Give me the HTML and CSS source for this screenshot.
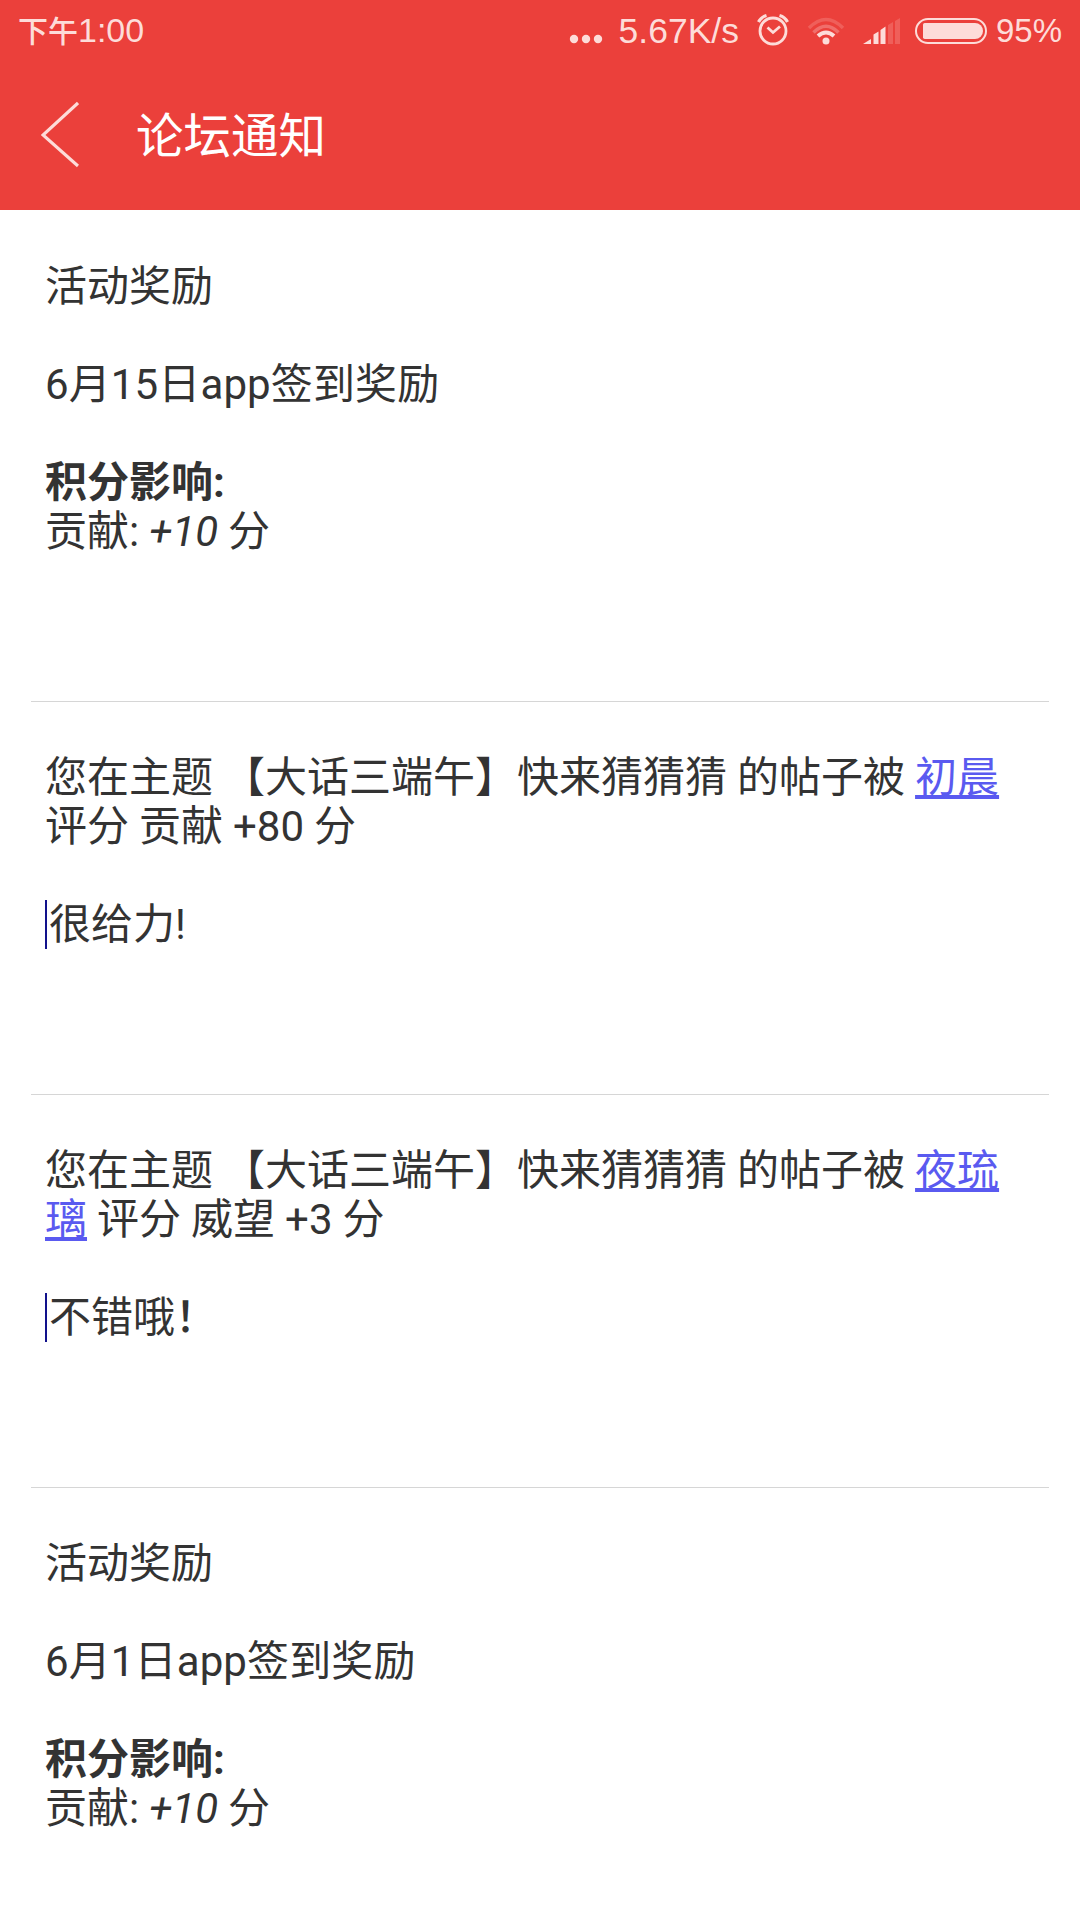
FILE: index.html
```html
<!DOCTYPE html>
<html lang="zh-CN">
<head>
    <meta charset="UTF-8">
    <title>论坛通知</title>
    <link rel="stylesheet" href="styles.css">
</head>
<body>
    <header class="header">
        <div class="status-bar">
            <div class="time"><span class="ampm">下午</span>1:00</div>
            <div class="status-right">
                <svg class="dots" width="34" height="10" viewBox="0 0 34 10" fill="#fddcd9"><circle cx="5" cy="5" r="4.2"/><circle cx="17" cy="5" r="4.2"/><circle cx="29" cy="5" r="4.2"/></svg>
                <span class="speed">5.67K/s</span>
                <svg class="alarm" width="32" height="34" viewBox="0 0 32 34" fill="none" stroke="#fddcd9"><circle cx="16" cy="18" r="13" stroke-width="2.8"/><path d="M10.5 14.5l5.5 5 7-6" stroke-width="2.8"/><path d="M1.5 9Q4 4 9.500 2.500M30.500 9Q28 4 22.500 2.500" stroke-width="3.2"/></svg>
                <svg class="wifi" width="38" height="28" viewBox="0 0 38 28" fill="none" stroke="#fddcd9"><path d="M2 11Q19-6 36 11" stroke-width="3.500" opacity=".2"/><path d="M6.500 15.500Q19 3 31.500 15.500" stroke-width="3.500" opacity=".3"/><path d="M11 19Q19 12 27 19" stroke-width="4"/><circle cx="19" cy="24" r="3.500" fill="#fddcd9" stroke="none"/></svg>
                <svg class="signal" width="37" height="26" viewBox="0 0 37 26" fill="#fddcd9"><path d="M0 26l8-5v5zM10.500 16.500l5-3V26h-5zM17.500 12l5-3.500V26h-5z"/><path d="M25 7l5-3v22h-5zM32 3l5-3v26h-5z" opacity=".2"/></svg>
                <span class="battery"></span>
                <span class="percent">95%</span>
            </div>
        </div>
        <div class="title-bar">
            <svg class="back" width="38" height="68" viewBox="0 0 38 68" fill="none" stroke="#fddcd9" stroke-width="3.2"><path d="M37 2L2 34l35 31"/></svg>
            <h1>论坛通知</h1>
        </div>
    </header>
    <main class="notices">
        <div class="notice reward">
            <p>活动奖励</p>
            <p class="event">6月15日app签到奖励</p>
            <p><b>积分影响:</b><br>贡献: <i>+10</i> 分</p>
        </div>
        <div class="notice">
            <p>您在主题 【大话三端午】快来猜猜猜 的帖子被 <a href="#">初晨</a> 评分 贡献 +80 分</p>
            <p class="quote">很给力!</p>
        </div>
        <div class="notice">
            <p>您在主题 【大话三端午】快来猜猜猜 的帖子被 <a href="#">夜琉璃</a> 评分 威望 +3 分</p>
            <p class="quote">不错哦<span class="mark">！</span></p>
        </div>
        <div class="notice reward">
            <p>活动奖励</p>
            <p class="event">6月1日app签到奖励</p>
            <p><b>积分影响:</b><br>贡献: <i>+10</i> 分</p>
        </div>
    </main>
</body>
</html>
```

FILE: styles.css
```css
body {
    margin: 0;
    height: 1920px;
    overflow: hidden;
    background: #fff;
    color: #333;
    font-family: Roboto, "Noto Sans CJK SC", sans-serif;
}

.header {
    height: 210px;
    background: #eb403b;
}

.status-bar {
    display: flex;
    justify-content: space-between;
    align-items: center;
    height: 60px;
    padding: 2px 18px 0;
    box-sizing: border-box;
    color: #fddcd9;
    font-family: "Liberation Sans", "Noto Sans CJK SC", sans-serif;
    font-size: 34px;
    line-height: 58px;
}

.time {
    height: 60px;
}

.ampm {
    font-size: 30px;
    font-weight: 500;
}

.status-right {
    display: flex;
    align-items: center;
    height: 58px;
}

.dots {
    margin: 15px 16px 0 0;
}

.speed {
    margin-right: 1px;
    font-size: 35.5px;
}

.alarm {
    margin: -2px 0 0 17px;
}

.wifi {
    margin-left: 18px;
}

.signal {
    margin: 0 15px 0 18px;
}

.battery {
    box-sizing: border-box;
    width: 72px;
    height: 26px;
    margin: -1px 9px 0 0;
    padding: 3px 2px 3px 6px;
    border: 2px solid #fddcd9;
    border-radius: 13px;
}

.battery::before {
    content: "";
    display: block;
    height: 100%;
    background: #fddcd9;
    border-radius: 2px 9px 9px 2px;
}

.percent {
    font-size: 33px;
}

.title-bar {
    display: flex;
    align-items: center;
    height: 150px;
    padding-left: 41px;
}

.title-bar h1 {
    margin: -6px 0 0 57px;
    color: #fff;
    font-size: 47.5px;
    font-weight: 400;
}

.back {
    margin-top: -1px;
}

.notices {
    padding: 0 31px;
}

.notice {
    box-sizing: border-box;
    height: 393px;
    padding: 51px 15px 0 14px;
    border-bottom: 1px solid #d6d6d6;
    font-size: 42px;
    line-height: 49px;
    word-spacing: -0.4px;
}

.notice.reward {
    height: 492px;
}

.notice:first-child {
    padding-top: 52px;
}

.notice p {
    margin: 0 0 49px;
}

.notice .event {
    letter-spacing: 0.12px;
}

.notice a {
    color: #5a5af0;
}

.notice .quote {
    padding-left: 2px;
    border-left: 2px solid #12128c;
}

.mark {
    font-weight: 500;
}
```
